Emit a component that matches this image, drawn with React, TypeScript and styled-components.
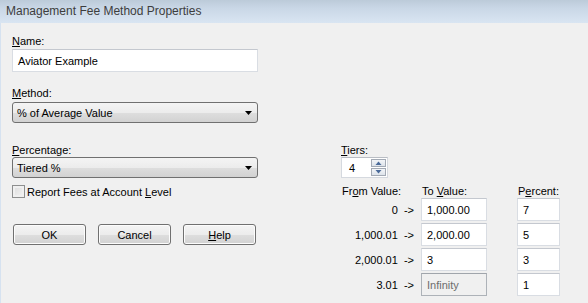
import styled, { createGlobalStyle } from "styled-components";

const GlobalStyle = createGlobalStyle`
  html, body {
    margin: 0;
    padding: 0;
    background: #f0f0f0;
    overflow: hidden;
  }
  * {
    box-sizing: border-box;
  }
`

const tiers = [
    {from: '0', to: '1,000.00', percent: '7', locked: false},
    {from: '1,000.01', to: '2,000.00', percent: '5', locked: false},
    {from: '2,000.01', to: '3', percent: '3', locked: false},
    {from: '3.01', to: 'Infinity', percent: '1', locked: true},
]

const ArrowDown = () => (
    <svg width="7" height="4" viewBox="0 0 7 4">
        <path d="M0 0 H7 L3.5 4 Z" fill="#000"/>
    </svg>
)

const SpinTriangle = ({up}: { up: boolean }) => (
    <svg width="7" height="4" viewBox="0 0 7 4">
        <path d={up ? "M0.5 4 H6.5 L3.5 0.5 Z" : "M0.5 0 H6.5 L3.5 3.5 Z"} fill="#4a6a9a"/>
    </svg>
)

const App = () => {
    return (
        <>
            <GlobalStyle/>
            <Window>
                <TitleBar>Management Fee Method Properties</TitleBar>
                <Body>
                    <LeftCol>
                        <Label><u>N</u>ame:</Label>
                        <TextBox gap={1}>Aviator Example</TextBox>

                        <Label top={15}><u>M</u>ethod:</Label>
                        <Combo gap={2}>
                            <span>% of Average Value</span>
                            <ArrowDown/>
                        </Combo>

                        <Label top={21}><u>P</u>ercentage:</Label>
                        <Combo gap={0}>
                            <span>Tiered %</span>
                            <ArrowDown/>
                        </Combo>

                        <CheckRow>
                            <CheckBox/>
                            <span>Report Fees at Account <u>L</u>evel</span>
                        </CheckRow>

                        <ButtonRow>
                            <Button>OK</Button>
                            <Button>Cancel</Button>
                            <Button><u>H</u>elp</Button>
                        </ButtonRow>
                    </LeftCol>

                    <RightCol>
                        <Label><u>T</u>iers:</Label>
                        <Spin>
                            <span>4</span>
                            <SpinButtons>
                                <SpinButton><SpinTriangle up/></SpinButton>
                                <SpinButton><SpinTriangle up={false}/></SpinButton>
                            </SpinButtons>
                        </Spin>

                        <TierGrid>
                            <HeaderCell>Fr<u>o</u>m Value:</HeaderCell>
                            <HeaderCell>To <u>V</u>alue:</HeaderCell>
                            <HeaderCell>P<u>e</u>rcent:</HeaderCell>
                            {tiers.map(t => (
                                <TierRow key={t.from}>
                                    <FromCell>{t.from} &nbsp;-&gt;</FromCell>
                                    <CellBox disabled={t.locked}>{t.to}</CellBox>
                                    <CellBox disabled={false}>{t.percent}</CellBox>
                                </TierRow>
                            ))}
                        </TierGrid>
                    </RightCol>
                </Body>
            </Window>
        </>
    )
}

export default App

const Window = styled.div`
  width: 588px;
  height: 303px;
  display: flex;
  flex-direction: column;
  font-family: "Liberation Sans", Arial, sans-serif;
  font-size: 11px;
  color: #000;
  background: #f0f0f0;
`

const TitleBar = styled.div`
  height: 23px;
  flex-shrink: 0;
  padding: 4px 0 0 6px;
  font-size: 12px;
  color: #3d3d3d;
  background: linear-gradient(to bottom, #bccbd9 0%, #c9d7e6 35%, #d9e5f2 100%);
`

const Body = styled.div`
  flex: 1;
  display: flex;
  padding: 12px 0 0 11px;
  border-left: 1px solid #d6e2f0;
`

const LeftCol = styled.div`
  width: 246px;
  display: flex;
  flex-direction: column;
`

const RightCol = styled.div`
  margin: 109px 0 0 83px;
  display: flex;
  flex-direction: column;
`

const Label = styled.div<{ top?: number }>`
  height: 13px;
  line-height: 13px;
  margin-top: ${p => p.top || 0}px;
  white-space: nowrap;
`

const TextBox = styled.div<{ gap: number }>`
  margin-top: ${p => p.gap}px;
  height: 23px;
  padding-left: 5px;
  display: flex;
  align-items: center;
  background: #fff;
  border: 1px solid #d9dde3;
  border-top-color: #c4c8cf;
`

const Combo = styled.div<{ gap: number }>`
  margin-top: ${p => p.gap}px;
  height: 21px;
  padding: 0 5px 0 4px;
  display: flex;
  align-items: center;
  justify-content: space-between;
  border: 1px solid #707070;
  border-radius: 3px;
  background: linear-gradient(to bottom, #f4f4f4 0%, #ececec 50%, #dedede 51%, #d2d2d2 100%);
`

const CheckRow = styled.div`
  margin-top: 7px;
  display: flex;
  align-items: center;
  gap: 2px;
  height: 13px;
  white-space: nowrap;
`

const CheckBox = styled.div`
  width: 13px;
  height: 13px;
  border: 1px solid #8e8f8f;
  background: linear-gradient(135deg, #dcdcdc 0%, #f4f4f4 100%);
  box-shadow: inset 0 0 0 2px #f0f0f0;
`

const ButtonRow = styled.div`
  margin-top: 26px;
  padding-left: 1px;
  display: flex;
  gap: 12px;
`

const Button = styled.div`
  width: 73px;
  height: 21px;
  display: flex;
  align-items: center;
  justify-content: center;
  border: 1px solid #707070;
  border-radius: 3px;
  background: linear-gradient(to bottom, #f4f4f4 0%, #ececec 50%, #dedede 51%, #d2d2d2 100%);
  box-shadow: inset 0 0 0 1px #fcfcfc;
`

const Spin = styled.div`
  width: 47px;
  height: 21px;
  display: flex;
  align-items: center;
  justify-content: space-between;
  padding: 0 1px 0 7px;
  background: #fff;
  border: 1px solid #d5d9df;
  border-top-color: #b9bdc4;
`

const SpinButtons = styled.div`
  display: flex;
  flex-direction: column;
  gap: 1px;
`

const SpinButton = styled.div`
  width: 15px;
  height: 8px;
  display: flex;
  align-items: center;
  justify-content: center;
  border: 1px solid #a3aab5;
  background: linear-gradient(to bottom, #f3f5f8 0%, #dde3ea 100%);
`

const TierGrid = styled.div`
  margin-top: 7px;
  display: grid;
  grid-template-columns: 73px 66px 66px;
  grid-template-rows: 11px;
  column-gap: 7px;
  row-gap: 2px;
  align-items: center;
  & > div:nth-child(3) {
    margin-left: 23px;
  }
`

const TierRow = styled.div`
  display: contents;
`

const HeaderCell = styled.div`
  align-self: start;
  height: 13px;
  line-height: 13px;
  white-space: nowrap;
  padding-left: 1px;
`

const FromCell = styled.div`
  text-align: right;
  white-space: nowrap;
`

const CellBox = styled.div<{ disabled: boolean }>`
  height: 23px;
  padding-left: 5px;
  display: flex;
  align-items: center;
  background: ${p => p.disabled ? '#f0f0f0' : '#fff'};
  color: ${p => p.disabled ? '#6d6d6d' : '#000'};
  border: 1px solid ${p => p.disabled ? '#adb2b8' : '#d9dde3'};
  border-top-color: ${p => p.disabled ? '#a0a5ab' : '#c4c8cf'};
  &:nth-child(3n) {
    margin-left: 23px;
  }
`
